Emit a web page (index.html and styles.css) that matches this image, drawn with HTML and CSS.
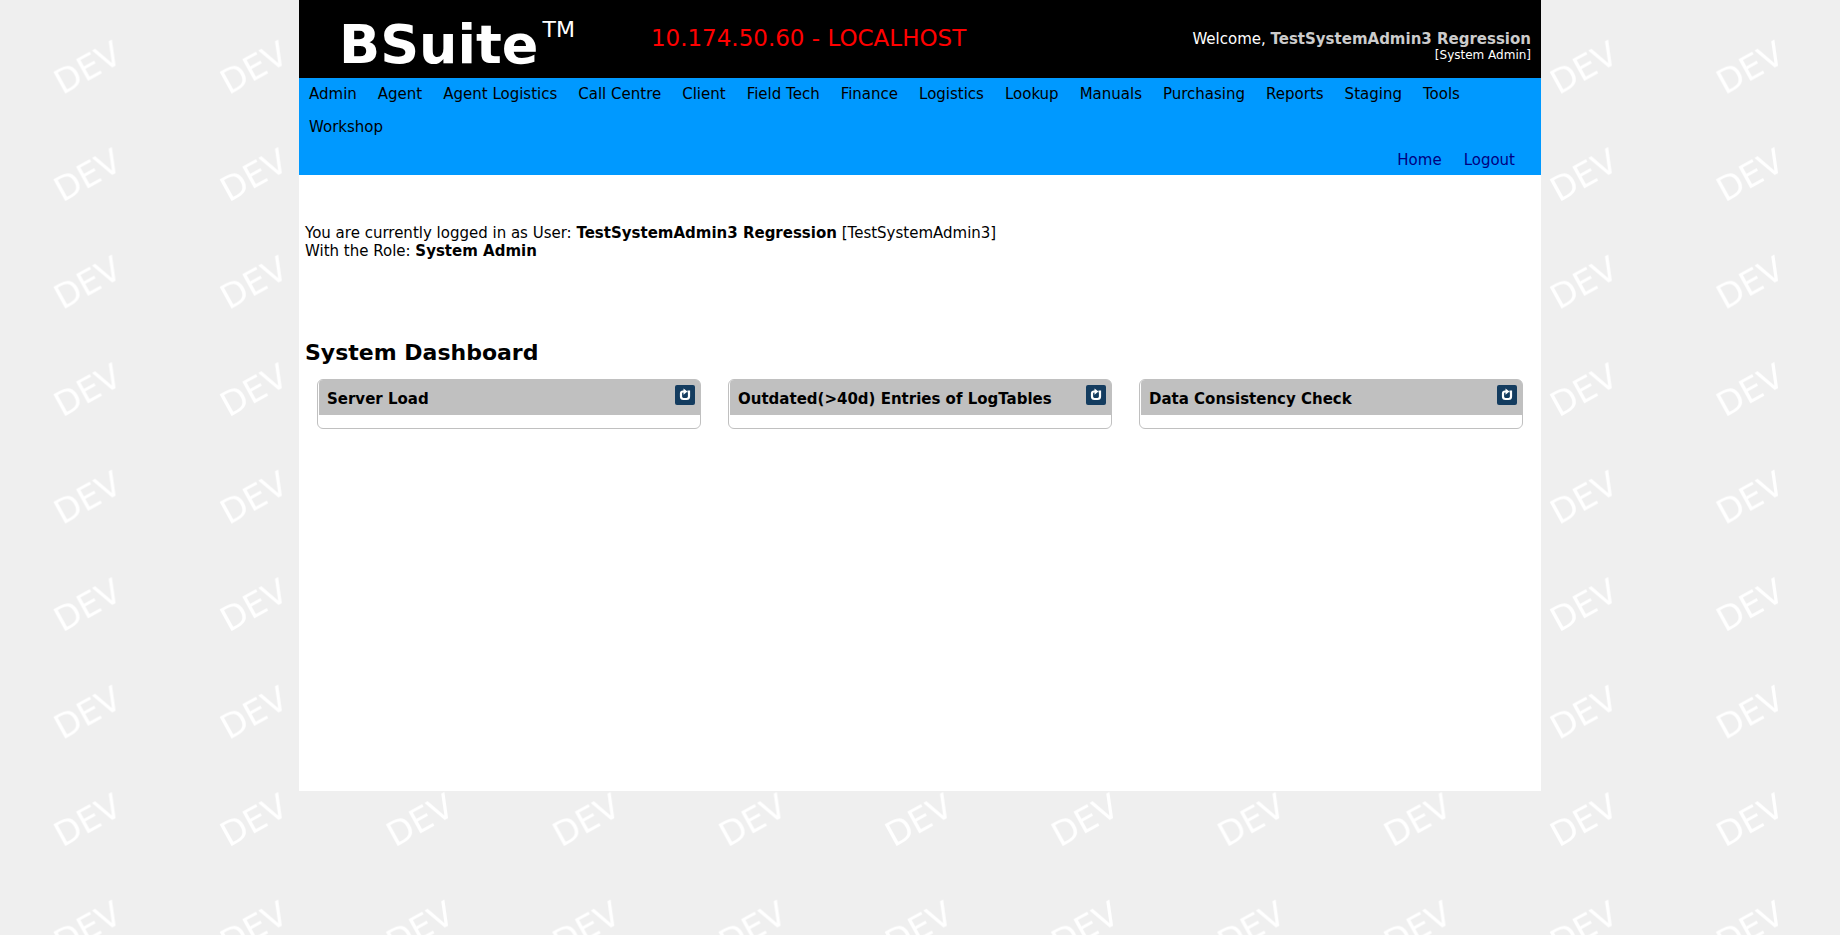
FILE: index.html
```html
<!DOCTYPE html>
<html lang="en">
<head>
<meta charset="utf-8">
<title>BSuite</title>
<link rel="stylesheet" href="styles.css">
</head>
<body>
<svg class="watermark" aria-hidden="true">
  <defs>
    <pattern id="dev" width="133" height="86" patternUnits="userSpaceOnUse" patternTransform="scale(1.25)">
      <text class="watermark-text" transform="translate(50 76) rotate(-29)">DEV</text>
    </pattern>
    <symbol id="reload" viewBox="0 0 20 20">
      <path d="M9 6.500H8Q6 6.500 6 8.500V11.500Q6 14 8.500 14H11.500Q14 14 14 11.500V6.500H12.500" fill="none" stroke="#fff" stroke-width="2.200"/>
      <path d="M8.500 3.500L12.500 6.500L8.500 9.800Z" fill="#fff"/>
    </symbol>
  </defs>
  <rect width="100%" height="100%" fill="url(#dev)"/>
</svg>
<div class="page">
  <header class="banner">
    <div class="logo">BSuite<span class="logo-mark">TM</span></div>
    <div class="server">10.174.50.60 - LOCALHOST</div>
    <div class="welcome">Welcome, <b class="welcome-name">TestSystemAdmin3 Regression</b><div class="welcome-role">[System Admin]</div></div>
  </header>
  <nav class="menu">
    <div class="menu-main">
      <a href="#">Admin</a>
      <a href="#">Agent</a>
      <a href="#">Agent Logistics</a>
      <a href="#">Call Centre</a>
      <a href="#">Client</a>
      <a href="#">Field Tech</a>
      <a href="#">Finance</a>
      <a href="#">Logistics</a>
      <a href="#">Lookup</a>
      <a href="#">Manuals</a>
      <a href="#">Purchasing</a>
      <a href="#">Reports</a>
      <a href="#">Staging</a>
      <a href="#">Tools</a>
      <a href="#">Workshop</a>
    </div>
    <div class="menu-user">
      <a href="#">Home</a>
      <a href="#">Logout</a>
    </div>
  </nav>
  <main class="content">
    <p class="session">You are currently logged in as User: <b>TestSystemAdmin3 Regression</b> [TestSystemAdmin3]<br>With the Role: <b>System Admin</b></p>
    <h1 class="title">System Dashboard</h1>
    <div class="cards">
      <section class="card">
        <div class="card-head"><h2 class="card-title">Server Load</h2><button class="reload" type="button" aria-label="Reload Server Load"><svg class="reload-icon"><use href="#reload"/></svg></button></div>
      </section>
      <section class="card">
        <div class="card-head"><h2 class="card-title">Outdated(&gt;40d) Entries of LogTables</h2><button class="reload" type="button" aria-label="Reload Outdated Entries"><svg class="reload-icon"><use href="#reload"/></svg></button></div>
      </section>
      <section class="card">
        <div class="card-head"><h2 class="card-title">Data Consistency Check</h2><button class="reload" type="button" aria-label="Reload Data Consistency Check"><svg class="reload-icon"><use href="#reload"/></svg></button></div>
      </section>
    </div>
  </main>
</div>
</body>
</html>
```
FILE: styles.css
```css
* { box-sizing: border-box; }
body {
  margin: 0;
  background: #efefef;
  color: #000;
  font: 15px/18px Verdana, "DejaVu Sans", sans-serif;
}
a { text-decoration: none; }
.watermark {
  position: fixed;
  inset: 0;
  width: 100%;
  height: 100%;
  z-index: -1;
}
.watermark-text {
  font: 27px Verdana, "DejaVu Sans", sans-serif;
  fill: #fff;
}
.page {
  max-width: 1242px;
  margin: 0 auto;
  background: #fff;
}
.banner {
  display: flex;
  justify-content: space-between;
  min-height: 78px;
  padding: 0 10px 0 40px;
  background: #000;
  color: #fff;
}
.logo {
  display: flex;
  align-items: flex-start;
  gap: 4px;
  padding-top: 13px;
  font-size: 54px;
  line-height: 64px;
  font-weight: bold;
}
.logo-mark {
  padding-top: 4px;
  font-size: 22px;
  line-height: 26px;
  font-weight: normal;
}
.server {
  flex: 1;
  padding: 24px 0 0 76px;
  color: #f00;
  font-size: 23px;
  line-height: 28px;
}
.welcome {
  padding-top: 30px;
  text-align: right;
}
.welcome-name { color: #ccc; }
.welcome-role {
  font-size: 12px;
  line-height: 14px;
}
.menu {
  background: #09f;
  line-height: 33px;
}
.menu-main {
  display: flex;
  flex-wrap: wrap;
  column-gap: 21px;
  padding: 0 10px;
}
.menu-main a { color: #000; }
.menu-user {
  display: flex;
  justify-content: flex-end;
  gap: 22px;
  padding: 2px 26px 0 0;
  line-height: 29px;
}
.menu-user a { color: #000080; }
.content {
  min-height: 616px;
  padding: 49px 6px 0;
}
.session { margin: 0 0 79px; }
.title {
  margin: 0 0 12px;
  font-size: 22px;
  line-height: 28px;
}
.cards {
  display: grid;
  grid-template-columns: repeat(3, 1fr);
  gap: 27px;
  padding: 0 12px;
}
.card {
  padding: 0 0 13px 1px;
  border: 1px solid silver;
  border-radius: 6px;
}
.card-head {
  display: flex;
  justify-content: space-between;
  align-items: flex-start;
  padding: 5px 5px 7px 8px;
  background: silver;
  border-radius: 4px 4px 0 0;
}
.card-title {
  margin: 0;
  padding-top: 5px;
  font-size: 15px;
  line-height: 18px;
  white-space: nowrap;
}
.reload {
  width: 20px;
  height: 20px;
  padding: 0;
  border: 0;
  border-radius: 2px;
  background: #143c5f;
}
.reload-icon {
  display: block;
  width: 20px;
  height: 20px;
}
```
